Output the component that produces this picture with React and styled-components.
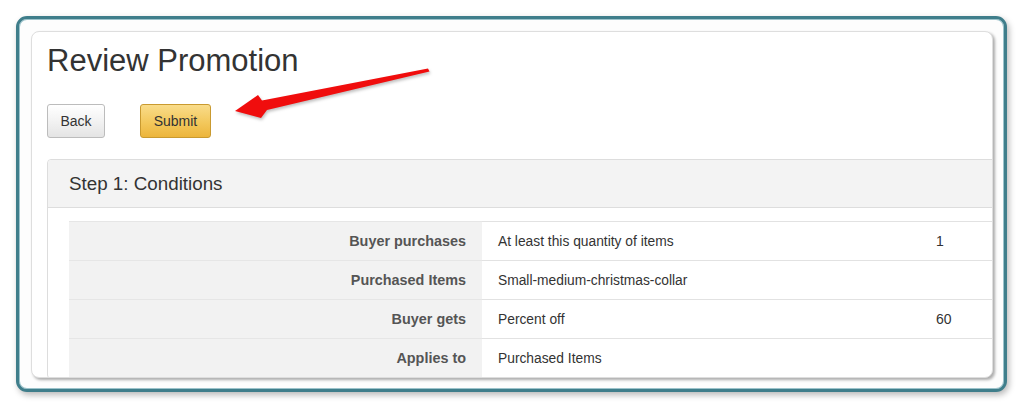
import React from "react";
import styled, { createGlobalStyle } from "styled-components";

const GlobalStyle = createGlobalStyle`
  html, body {
    margin: 0;
    padding: 0;
    background: #ffffff;
  }
  body {
    font-family: "Liberation Sans", Arial, sans-serif;
    color: #333;
  }
  * { box-sizing: border-box; }
`;

const rows = [
  { label: "Buyer purchases", value: "At least this quantity of items", extra: "1" },
  { label: "Purchased Items", value: "Small-medium-christmas-collar", extra: "" },
  { label: "Buyer gets", value: "Percent off", extra: "60" },
  { label: "Applies to", value: "Purchased Items", extra: "" },
];

export default function App() {
  return (
    <>
      <GlobalStyle />
      <Page>
        <Frame>
          <Card>
            <Title>Review Promotion</Title>

            <ButtonRow>
              <Button>Back</Button>
              <Button $primary>Submit</Button>
            </ButtonRow>

            <Panel>
              <PanelHeading>Step 1: Conditions</PanelHeading>
              <PanelBody>
                <Table>
                  <tbody>
                    {rows.map((r) => (
                      <tr key={r.label}>
                        <LabelCell>{r.label}</LabelCell>
                        <ValueCell>{r.value}</ValueCell>
                        <ExtraCell>{r.extra}</ExtraCell>
                      </tr>
                    ))}
                  </tbody>
                </Table>
              </PanelBody>
            </Panel>
          </Card>
        </Frame>

        <Arrow viewBox="225 60 215 65" width="215" height="65">
          <polygon
            points="235,111 258,95 262,100.5 428,68.5 429.5,71.5 267,110 261,118"
            fill="#f00d0d"
          />
        </Arrow>
      </Page>
    </>
  );
}

const Page = styled.div`
  position: relative;
  width: 1024px;
  height: 409px;
  padding: 16px 0 0 16px;
`;

const Frame = styled.div`
  width: 991px;
  height: 376px;
  padding: 12px 11px 11px 12px;
  border: 3px solid #3f7e8b;
  border-radius: 11px;
  background: #fdfdfd;
  box-shadow: 2px 3px 6px rgba(0, 0, 0, 0.28), inset 0 0 0 1px #9cc3cb;
`;

const Card = styled.div`
  width: 962px;
  height: 347px;
  overflow: hidden;
  background: #fff;
  border: 1px solid #dedede;
  border-radius: 8px;
  padding: 11px 0 0 15px;
  box-shadow: 2px 2px 3px rgba(0, 0, 0, 0.32);
`;

const Title = styled.h1`
  margin: 0;
  font-size: 31px;
  line-height: 36px;
  font-weight: normal;
  color: #333;
`;

const ButtonRow = styled.div`
  display: flex;
  gap: 35px;
  margin-top: 25px;
`;

const Button = styled.button`
  height: 34px;
  padding: 0 12.5px;
  font-family: "Liberation Sans", Arial, sans-serif;
  font-size: 14px;
  color: #333;
  border-radius: 3px;
  border: 1px solid ${(p) => (p.$primary ? "#c99a30" : "#bcbcbc")};
  background: ${(p) =>
    p.$primary
      ? "linear-gradient(to bottom, #f9dc8a 0%, #f3c85c 55%, #ecb53c 100%)"
      : "linear-gradient(to bottom, #ffffff 0%, #f1f1f1 55%, #e4e4e4 100%)"};
  cursor: pointer;
`;

const Panel = styled.div`
  width: 1000px;
  margin-top: 21px;
  border: 1px solid #dddddd;
  border-radius: 4px;
`;

const PanelHeading = styled.div`
  height: 48px;
  display: flex;
  align-items: center;
  padding-left: 21px;
  background: #f3f3f3;
  border-bottom: 1px solid #dddddd;
  border-radius: 4px 4px 0 0;
  font-size: 18.8px;
  color: #333;
`;

const PanelBody = styled.div`
  padding: 13px 0 0 21px;
`;

const Table = styled.table`
  border-collapse: collapse;
  table-layout: fixed;
  width: 1100px;
  font-size: 14px;
`;

const Cell = styled.td`
  height: 39px;
  padding: 0;
  border-top: 1px solid #e2e2e2;
  vertical-align: middle;
`;

const LabelCell = styled(Cell)`
  width: 413px;
  padding-right: 16px;
  text-align: right;
  font-size: 14.4px;
  font-weight: bold;
  color: #555;
  background: #f2f2f2;
  border-top-color: #e6e6e6;
`;

const ValueCell = styled(Cell)`
  width: 454px;
  padding-left: 16px;
  font-size: 13.8px;
  color: #333;
`;

const ExtraCell = styled(Cell)`
  color: #333;
`;

const Arrow = styled.svg`
  position: absolute;
  left: 225px;
  top: 60px;
  pointer-events: none;
  filter: drop-shadow(1px 2px 1.5px rgba(0, 0, 0, 0.25));
`;
